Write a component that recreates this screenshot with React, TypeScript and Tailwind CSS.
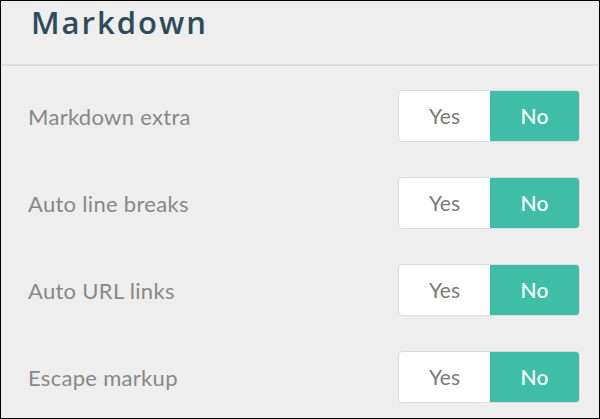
const settings = ["Markdown extra", "Auto line breaks", "Auto URL links", "Escape markup"];

function Toggle() {
  return (
    <div className="flex h-[52px] w-[182px] overflow-hidden rounded-[4px] border border-[#dcdcdc] bg-white">
      <button className="flex w-[91px] items-center justify-center text-[21px] text-[#7a7a7a]">Yes</button>
      <button className="flex flex-1 items-center justify-center bg-[#3fbda6] text-[21px] font-semibold text-[#eefdf9]">
        No
      </button>
    </div>
  );
}

export default function App() {
  return (
    <div
      className="h-[419px] w-[600px] overflow-hidden border border-black bg-[#eeeeee]"
      style={{ fontFamily: "Lato, 'Liberation Sans', sans-serif" }}
    >
      <div className="h-[65px] border-b-2 border-[#dfdfdf] pl-[30px] pt-[1px]">
        <h1
          className="text-[31px] font-semibold leading-[40px] tracking-[2px] text-[#2e4b5a]"
          style={{ fontFamily: "'Open Sans', sans-serif" }}
        >
          Markdown
        </h1>
      </div>
      <div className="flex flex-col gap-[35px] pl-[27px] pr-[19px] pt-[24px]">
        {settings.map((label) => (
          <div key={label} className="flex items-center justify-between">
            <span className="text-[22px] tracking-[0.3px] text-[#888888]">{label}</span>
            <Toggle />
          </div>
        ))}
      </div>
    </div>
  );
}
